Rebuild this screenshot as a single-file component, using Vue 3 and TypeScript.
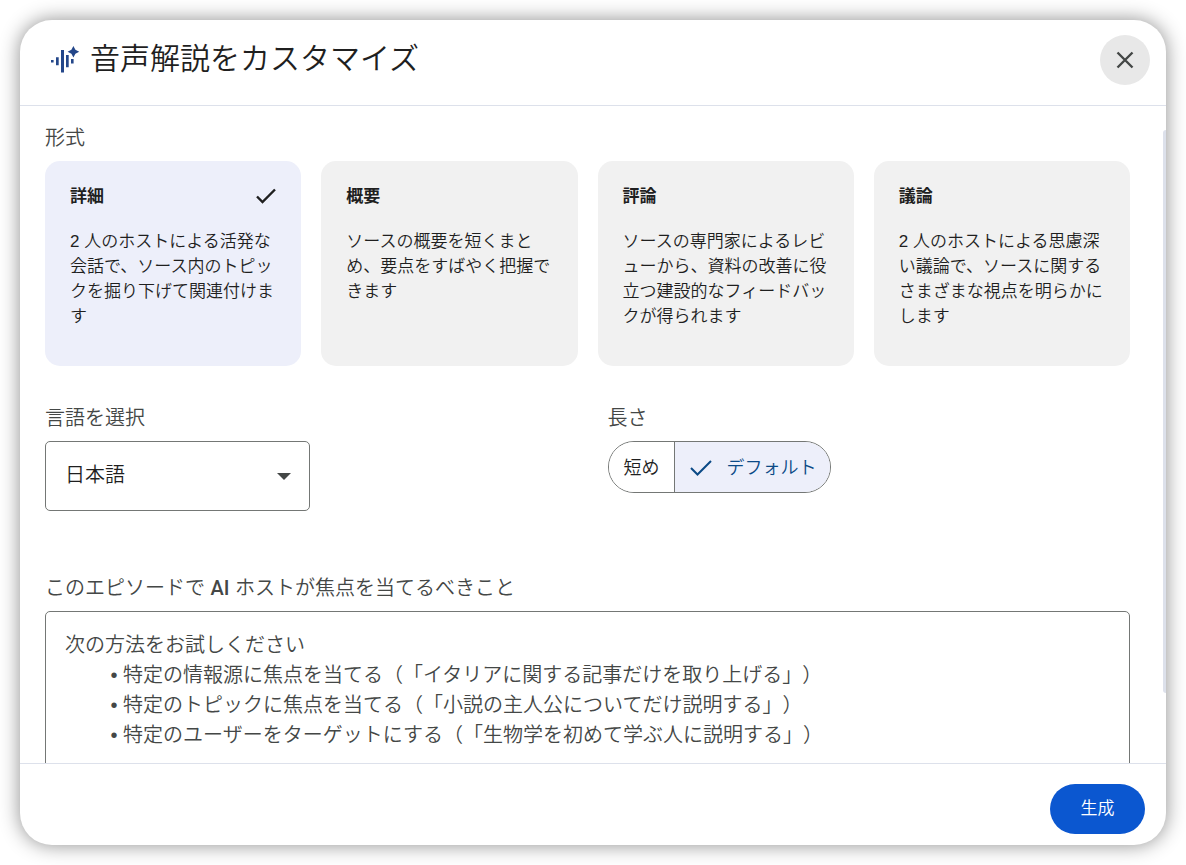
<script setup lang="ts">
import { ref } from 'vue'

interface Format {
  id: string
  title: string
  description: string
}

const formats: Format[] = [
  { id: 'deep', title: '詳細', description: '2 人のホストによる活発な会話で、ソース内のトピックを掘り下げて関連付けます' },
  { id: 'brief', title: '概要', description: 'ソースの概要を短くまとめ、要点をすばやく把握できます' },
  { id: 'critique', title: '評論', description: 'ソースの専門家によるレビューから、資料の改善に役立つ建設的なフィードバックが得られます' },
  { id: 'debate', title: '議論', description: '2 人のホストによる思慮深い議論で、ソースに関するさまざまな視点を明らかにします' },
]

const lengths = [
  { id: 'short', label: '短め' },
  { id: 'default', label: 'デフォルト' },
]

const selectedFormat = ref('deep')
const selectedLength = ref('default')
const language = ref('ja')
const focus = ref('')

// Two ideographic spaces and a word space set the depth of the bullet list.
const indent = '\u3000\u3000 '
const placeholder = [
  '次の方法をお試しください',
  `${indent}• 特定の情報源に焦点を当てる（「イタリアに関する記事だけを取り上げる」）`,
  `${indent}• 特定のトピックに焦点を当てる（「小説の主人公についてだけ説明する」）`,
  `${indent}• 特定のユーザーをターゲットにする（「生物学を初めて学ぶ人に説明する」）`,
].join('\n')
</script>

<template>
  <div class="page" lang="ja">
    <section class="dialog" role="dialog" aria-labelledby="dialog-title">
      <header class="header">
        <svg class="logo" viewBox="0 0 30 30" aria-hidden="true">
          <path d="M1 15h2.6v2.6H1zM6 12.3h2.7v8H6zM11 5h3v22.6h-3zM16 10h2.7v12.3H16zM21 14h2.6v4.6H21z" />
          <path d="M23.4 1l2 3.8 3.8 2-3.8 2-2 3.8-2-3.8-3.8-2 3.8-2z" />
        </svg>
        <h1 id="dialog-title" class="title">音声解説をカスタマイズ</h1>
        <button class="close" type="button" aria-label="閉じる">
          <svg viewBox="0 0 30 30" aria-hidden="true">
            <path d="M7.5 7.5l15 15M22.5 7.5l-15 15" />
          </svg>
        </button>
      </header>

      <div class="body">
        <div class="content">
          <h2 id="format-label" class="label">形式</h2>
          <div class="formats" role="group" aria-labelledby="format-label">
            <button
              v-for="format in formats"
              :key="format.id"
              class="card"
              :class="{ selected: selectedFormat === format.id }"
              type="button"
              :aria-pressed="selectedFormat === format.id"
              @click="selectedFormat = format.id"
            >
              <span class="card-head">
                <span class="card-title">{{ format.title }}</span>
                <svg v-if="selectedFormat === format.id" class="check" viewBox="0 0 24 24" aria-hidden="true">
                  <path d="M3 11.5l5.5 5.5L21 4.5" />
                </svg>
              </span>
              <span class="card-text">{{ format.description }}</span>
            </button>
          </div>

          <div class="options">
            <div>
              <label class="label" for="language">言語を選択</label>
              <div class="select-wrap">
                <select id="language" v-model="language" class="select">
                  <option value="ja">日本語</option>
                  <option value="en">English</option>
                </select>
                <svg class="arrow" viewBox="0 0 14 8" aria-hidden="true"><path d="M0 0h14L7 7z" /></svg>
              </div>
            </div>
            <div>
              <span id="length-label" class="label">長さ</span>
              <div class="segments" role="group" aria-labelledby="length-label">
                <button
                  v-for="item in lengths"
                  :key="item.id"
                  class="segment"
                  :class="{ active: selectedLength === item.id }"
                  type="button"
                  :aria-pressed="selectedLength === item.id"
                  @click="selectedLength = item.id"
                >
                  <svg v-if="selectedLength === item.id" class="check" viewBox="0 0 24 24" aria-hidden="true">
                    <path d="M2 14l6.5 6.5L22 7" />
                  </svg>
                  <span>{{ item.label }}</span>
                </button>
              </div>
            </div>
          </div>

          <label class="label" for="focus">このエピソードで <span class="latin">AI</span> ホストが焦点を当てるべきこと</label>
          <textarea id="focus" v-model="focus" class="focus" :placeholder="placeholder"></textarea>
        </div>
        <div class="thumb"></div>
      </div>

      <footer class="footer">
        <button class="generate" type="button">生成</button>
      </footer>
    </section>
  </div>
</template>

<style>
body {
  margin: 0;
  background: #fff;
}
</style>

<style scoped>
* {
  box-sizing: border-box;
}

.page {
  display: flex;
  height: 100vh;
  padding: 20px;
  font-family: "Liberation Sans", "Noto Sans CJK JP", sans-serif;
  font-weight: 350;
  color: #1f1f1f;
  line-break: normal;
  text-spacing-trim: space-all;
}

button,
select,
textarea {
  font: inherit;
  color: inherit;
  text-spacing-trim: inherit;
}

button {
  cursor: pointer;
}

.dialog {
  display: flex;
  flex: 1;
  flex-direction: column;
  min-width: 0;
  overflow: hidden;
  background: #fff;
  border-radius: 32px;
  box-shadow: 0 0 20px rgba(0, 0, 0, 0.45);
}

.header {
  display: flex;
  align-items: center;
  padding: 15px 16px 20px 30px;
  border-bottom: 1px solid #dde1eb;
}

.logo {
  width: 30px;
  height: 30px;
  fill: #24478a;
}

.title {
  flex: 1;
  margin: 0 0 2px 10px;
  font-size: 30px;
  font-weight: inherit;
  line-height: 40px;
}

.close {
  display: grid;
  place-items: center;
  width: 50px;
  height: 50px;
  padding: 0;
  background: #e8e8e8;
  border: 0;
  border-radius: 50%;
}

.close svg {
  width: 30px;
  height: 30px;
  fill: none;
  stroke: #444746;
  stroke-width: 2.4;
}

.body {
  position: relative;
  flex: 1;
  min-height: 0;
}

.content {
  height: 100%;
  padding: 17px 36px 0 25px;
  overflow: hidden;
}

.thumb {
  position: absolute;
  top: 24px;
  right: 0;
  bottom: 70px;
  width: 3px;
  background: #dde1eb;
  border-radius: 3px 0 0 3px;
}

.label {
  display: block;
  margin: 0 0 8px;
  font-size: 20px;
  font-weight: inherit;
  line-height: 30px;
  color: #444746;
}

.latin {
  font-family: Roboto, sans-serif;
  font-weight: 500;
}

.formats {
  display: grid;
  grid-template-columns: repeat(4, 1fr);
  gap: 20px;
}

.card {
  display: flex;
  flex-direction: column;
  gap: 20px;
  min-height: 205px;
  padding: 23px 23px 21px 25px;
  text-align: left;
  background: #f1f1f1;
  border: 0;
  border-radius: 15px;
}

.card.selected {
  background: #edeffa;
}

.card-head {
  display: flex;
  align-items: center;
  justify-content: space-between;
  width: 100%;
}

.card-title {
  font-size: 17px;
  font-weight: 700;
  line-height: 25px;
}

.card-text {
  font-size: 17px;
  line-height: 25px;
}

.check {
  width: 24px;
  height: 24px;
  fill: none;
  stroke: currentColor;
  stroke-width: 2.4;
}

.options {
  display: grid;
  grid-template-columns: 1fr 1fr;
  gap: 40px;
  margin: 37px 0 62px;
}

.select-wrap {
  position: relative;
  width: 265px;
}

.select {
  width: 100%;
  height: 70px;
  padding: 0 40px 2px 19px;
  font-size: 20px;
  appearance: none;
  background: #fff;
  border: 1px solid #747775;
  border-radius: 5px;
}

.arrow {
  position: absolute;
  top: 32px;
  right: 19px;
  width: 14px;
  height: 8px;
  fill: #444746;
  pointer-events: none;
}

.segments {
  display: inline-flex;
  height: 52px;
  overflow: hidden;
  border: 1px solid #747775;
  border-radius: 26px;
}

.segment {
  display: flex;
  gap: 14px;
  align-items: center;
  padding: 0 14px 2px 15px;
  font-size: 18px;
  background: #fff;
  border: 0;
}

.segment + .segment {
  border-left: 1px solid #747775;
}

.segment.active {
  padding: 0 13px 2px 14px;
  color: #0b4a86;
  background: #edeffa;
}

.segment .check {
  stroke-width: 2;
}

.focus {
  display: block;
  width: 100%;
  height: 200px;
  padding: 18px 19px;
  font-size: 20px;
  line-height: 30px;
  resize: none;
  background: #fff;
  border: 1px solid #747775;
  border-radius: 5px;
}

.focus::placeholder {
  color: #444746;
  opacity: 1;
}

.footer {
  display: flex;
  justify-content: flex-end;
  padding: 20px 21px 11px;
  border-top: 1px solid #dde1eb;
}

.generate {
  min-width: 95px;
  height: 50px;
  padding: 0 20px 5px;
  font-size: 17px;
  color: #fff;
  background: #0b57d0;
  border: 0;
  border-radius: 25px;
}
</style>
